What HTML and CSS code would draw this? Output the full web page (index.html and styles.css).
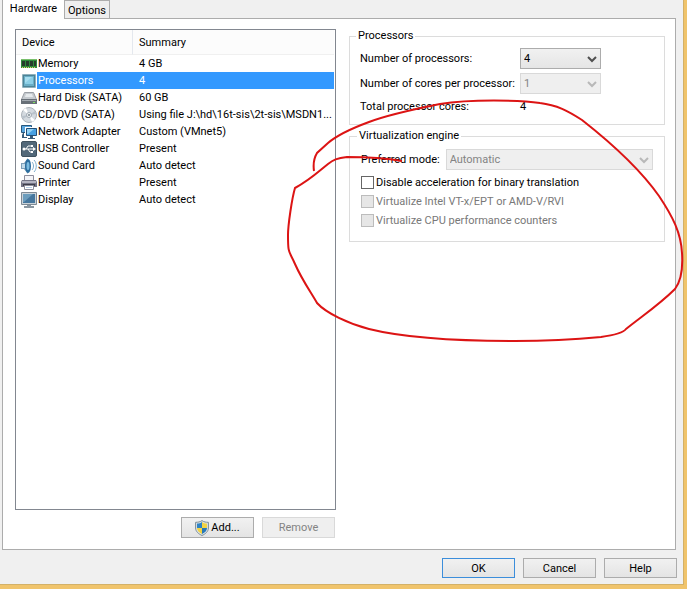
FILE: index.html
```html
<!DOCTYPE html>
<html lang="en">
<head>
<meta charset="utf-8">
<title>Virtual Machine Settings</title>
<link rel="stylesheet" href="styles.css">
</head>
<body>
<main class="dialog">
  <nav class="tabs" role="tablist">
    <button class="tab tab-active" role="tab" aria-selected="true">Hardware</button>
    <button class="tab" role="tab" aria-selected="false">Options</button>
  </nav>
  <section class="panel">
    <div class="devices">
      <div class="device-list">
        <table>
          <colgroup><col class="col-icon"><col class="col-name"><col></colgroup>
          <thead>
            <tr><th colspan="2">Device</th><th class="summary">Summary</th></tr>
          </thead>
          <tbody>
            <tr>
              <td class="icon"><svg width="16" height="16" viewBox="0 0 16 16"><path fill="#2f8a3c" d="M0 3h16v9H0z"/><path fill="#79bf6b" d="M0 3h16v1H0z"/><path fill="#263c2c" d="M1 5h3v5H1zM5 5h3v5H5zM9 5h3v5H9zM13 5h2v5h-2z"/><path fill="#d9d36a" d="M1 11h1v1H1zM3 11h1v1H3zM5 11h1v1H5zM7 11h1v1H7zM9 11h1v1H9zM11 11h1v1h-1zM13 11h1v1h-1z"/></svg></td>
              <td>Memory</td><td class="summary">4 GB</td>
            </tr>
            <tr class="selected">
              <td class="icon"><svg width="16" height="16" viewBox="0 0 16 16"><path fill="#4d8396" d="M2 2h12v12H2z"/><path fill="#69aec6" d="M3 3h10v10H3z"/><path fill="#8ccfe6" d="M4 4h8v7H4z"/><path fill="#a7def0" d="M4 4h7l-7 6z"/><path fill="none" stroke="#8fb2be" d="M1.500 1.500h13v13h-13z"/></svg></td>
              <td>Processors</td><td class="summary">4</td>
            </tr>
            <tr>
              <td class="icon"><svg width="16" height="16" viewBox="0 0 16 16"><path fill="#c5cacf" stroke="#9a9fa5" d="M3.500 2.500h9l3 7H.5z"/><path fill="#687078" d="M0 9h16v5H0z"/><path fill="#a4abb2" d="M1 10h14v1H1z"/><path fill="#e6eaed" d="M5 4h6l1 3H4z"/><path fill="#7ce35e" d="M12 12h2v1h-2z"/></svg></td>
              <td>Hard Disk (SATA)</td><td class="summary">60 GB</td>
            </tr>
            <tr>
              <td class="icon"><svg width="16" height="16" viewBox="0 0 16 16"><circle cx="8" cy="8" r="7.500" fill="#d4dae0" stroke="#aab1b8"/><path fill="#fff" d="M8 8 2 3l3-2zM8 8l6 5-3 2z"/><path fill="#b9c2cb" d="M8 8 1 9l1 3zM8 8l7-1-1-3z"/><circle cx="8" cy="8" r="2.500" fill="#eef1f3" stroke="#a2abb4"/><circle cx="8" cy="8" r="1" fill="#7d8892"/></svg></td>
              <td>CD/DVD (SATA)</td><td class="summary">Using file J:\hd\16t-sis\2t-sis\MSDN1...</td>
            </tr>
            <tr>
              <td class="icon"><svg width="16" height="16" viewBox="0 0 16 16"><path fill="#5ba7df" stroke="#28577d" d="M.5 1.500h10v7H.5z"/><path fill="#fff" d="M4 3h12v10H4z"/><path fill="#48a0e2" stroke="#244f76" d="M5.500 4.500h10v7h-10z"/><path fill="#91d1f5" d="M6 5h7l-6 5H6z"/><path fill="#385c7a" d="M9 12h3v2h2v1H7v-1h2zM2 9h1v4h3v1H1v-3z"/></svg></td>
              <td>Network Adapter</td><td class="summary">Custom (VMnet5)</td>
            </tr>
            <tr>
              <td class="icon"><svg width="16" height="16" viewBox="0 0 16 16"><rect x=".5" y=".5" width="15" height="15" rx="1.500" fill="#526879" stroke="#40525f"/><path fill="none" stroke="#fff" d="M3 8h9M5 8l2-3h3M7 8l2 3h2"/><circle cx="3" cy="8" r="1.500" fill="#fff"/><path fill="#fff" d="m12 6 3 2-3 2zM10 4h2v2h-2zM10 10h2v2h-2z"/></svg></td>
              <td>USB Controller</td><td class="summary">Present</td>
            </tr>
            <tr>
              <td class="icon"><svg width="16" height="16" viewBox="0 0 16 16"><path fill="#7f9fb8" d="M0 5h3l4-5v16l-4-5H0z"/><path fill="#c3dbe9" d="M1 6h3v4H1z"/><ellipse cx="7" cy="8" rx="3" ry="7" fill="#2b6d9e"/><ellipse cx="7" cy="8" rx="1.500" ry="4" fill="#7bbbe0"/><path fill="none" stroke="#7eaecd" d="M11 4c2 2 2 6 0 8M13 2c3 3 3 9 0 12"/></svg></td>
              <td>Sound Card</td><td class="summary">Auto detect</td>
            </tr>
            <tr>
              <td class="icon"><svg width="16" height="16" viewBox="0 0 16 16"><path fill="#f4f4f8" stroke="#8e8e9c" d="M3.500.5h9v6h-9z"/><path fill="#747486" d="M1 5h14l1 2v5H0V7z"/><path fill="#b4b4c2" d="M1 6h14v2H1z"/><path fill="#3d3d4b" d="M2 9h12v2H2z"/><path fill="#fff" stroke="#8e8e9c" d="M3.500 10.500h9v4h-9z"/><path fill="#b8cde7" d="M5 12h6v1H5z"/></svg></td>
              <td>Printer</td><td class="summary">Present</td>
            </tr>
            <tr>
              <td class="icon"><svg width="16" height="16" viewBox="0 0 16 16"><path fill="#cbd3d9" stroke="#7f8a94" d="M.5.5h15v12H.5z"/><path fill="#46779e" d="M2 2h12v9H2z"/><path fill="#6c9dbd" d="M2 2h10L3 10H2z"/><path fill="#8a96a0" d="M6 13h4v1h3v2H3v-2h3z"/></svg></td>
              <td>Display</td><td class="summary">Auto detect</td>
            </tr>
          </tbody>
        </table>
      </div>
      <div class="device-actions">
        <button class="button"><svg width="14" height="16" viewBox="0 0 14 16"><path fill="#dce4e8" stroke="#7c8c94" d="M7 .6C5 2 3 2.300.6 2.300V8c0 3.500 3 6 6.400 7.500C10.400 14 13.400 11.500 13.400 8V2.300C11 2.300 9 2 7 .6z"/><path fill="#2f83c5" d="M7 2v6H2V3.500C4 3.500 5.500 3 7 2z"/><path fill="#f3d343" d="M7 2v6h5V3.500C10 3.500 8.500 3 7 2zM2 8h5v6c-3-1.500-5-3.500-5-6z"/><path fill="#2878b8" d="M12 8H7v6c3-1.500 5-3.500 5-6z"/></svg>Add...</button>
        <button class="button" disabled>Remove</button>
      </div>
    </div>
    <div class="settings">
      <fieldset class="group group-cpu">
        <legend>Processors</legend>
        <label for="cpus">Number of processors:</label>
        <span class="select"><select id="cpus"><option>4</option></select><svg width="10" height="7" viewBox="0 0 10 7"><path d="m1 1 4 4 4-4"/></svg></span>
        <label for="cores">Number of cores per processor:</label>
        <span class="select"><select id="cores" disabled><option>1</option></select><svg width="10" height="7" viewBox="0 0 10 7"><path d="m1 1 4 4 4-4"/></svg></span>
        <span>Total processor cores:</span>
        <output for="cpus cores">4</output>
      </fieldset>
      <fieldset class="group group-engine">
        <legend>Virtualization engine</legend>
        <div class="mode">
          <label for="mode">Preferred mode:</label>
          <span class="select"><select id="mode" disabled><option>Automatic</option></select><svg width="10" height="7" viewBox="0 0 10 7"><path d="m1 1 4 4 4-4"/></svg></span>
        </div>
        <label class="check"><input type="checkbox">Disable acceleration for binary translation</label>
        <label class="check check-off"><input type="checkbox" disabled>Virtualize Intel VT-x/EPT or AMD-V/RVI</label>
        <label class="check check-off"><input type="checkbox" disabled>Virtualize CPU performance counters</label>
      </fieldset>
    </div>
  </section>
  <footer class="footer">
    <button class="button button-default">OK</button>
    <button class="button">Cancel</button>
    <button class="button">Help</button>
  </footer>
  <svg class="scribble" width="687" height="589" viewBox="0 0 687 589" aria-hidden="true"><path d="M402 161C380 157 360 157 347 157C337 158 333 160 328 164C318 172 310 180 295 188C292 198 288 225 288 235C288 255 289 250 295 264C302 280 312 294 317 303C326 313 349 324 369 329C405 338 465 341 515 341C545 341 580 339 601 337C615 335 623 333 626 329C645 314 660 304 675 289C681 281 683 268 682 253C681 233 673 217 659 196C640 169 610 142 582 120C568 111 557 105 540 103C520 100 470 99 440 104C415 109 390 114 369 122C350 129 335 137 328 143L317 153C314 158 313 164 314 171"/></svg>
</main>
</body>
</html>
```
FILE: styles.css
```css
* { box-sizing: border-box; }

body {
  margin: 0;
  background: #f0f0f0;
  color: #000;
  font: 11px/17px Roboto, "Noto Sans", sans-serif;
}

button, select { font: inherit; color: inherit; }

.dialog {
  position: relative;
  display: flex;
  flex-direction: column;
  min-height: 100vh;
  padding: 0 8px 7px 2px;
  border-right: 3px solid #f0c46c;
  border-bottom: 4px solid #f0c46c;
  box-shadow: inset -1px -1px #d3b168;
}

.tabs {
  display: flex;
  height: 18px;
}

.tab {
  width: 46px;
  height: 18px;
  padding: 1px 0 0;
  border: 1px solid #acacac;
  border-bottom: 0;
  background: #eee;
}

.tab-active {
  z-index: 1;
  width: 62px;
  height: 19px;
  padding: 0 0 3px;
  border-width: 0 0 0 1px;
  background: #fff;
}

.panel {
  flex: 1;
  display: flex;
  gap: 13px;
  padding: 10px 10px 11px 12px;
  border: 1px solid #acacac;
  background: #fff;
}

.devices {
  flex: 0 0 321px;
  display: flex;
  flex-direction: column;
  gap: 7px;
}

.device-list {
  flex: 1;
  padding-right: 1px;
  border: 1px solid #828790;
}

table {
  width: 100%;
  table-layout: fixed;
  border-collapse: separate;
  border-spacing: 0;
}

.col-icon { width: 21px; }
.col-name { width: 95px; }

th, td {
  height: 17px;
  padding: 0 0 0 1px;
  font-weight: normal;
  line-height: 17px;
  text-align: left;
  white-space: nowrap;
}

th {
  height: 25px;
  padding-left: 6px;
  border-bottom: 1px solid #f0f0f0;
  background: #fcfcfc;
}

th.summary { border-left: 1px solid #e4e8ee; }
.summary { padding-left: 6px; }
td.summary { padding-left: 7px; }

.icon { padding-left: 5px; }
.icon svg { display: block; }

.selected td { background: #3399ff; color: #fff; }
.selected .icon { background: none; }

.device-actions, .footer {
  display: flex;
  justify-content: flex-end;
  gap: 8px;
}

.device-actions { padding-right: 1px; }

.button {
  display: flex;
  align-items: center;
  justify-content: center;
  width: 73px;
  height: 21px;
  padding: 0;
  border: 1px solid #acacac;
  background: linear-gradient(#f1f1f1, #e4e4e4);
}

.footer .button { height: 20px; }

.button svg { margin-right: 2px; }

.button:disabled {
  border-color: #d9d9d9;
  background: #efefef;
  color: #838383;
}

.footer .button-default { border-color: #3c8edb; }

.footer {
  margin: 8px -1px 0 0;
}

.settings { flex: 1; }

.group {
  min-width: 0;
  margin: 0;
  border: 1px solid #dcdcdc;
}

legend {
  margin-left: -4px;
  padding: 0 2px;
  line-height: 14px;
}

.group-cpu {
  display: grid;
  grid-template-columns: 160px 81px;
  row-gap: 4px;
  align-items: center;
  padding: 5px 10px 9px;
}

.group-engine {
  margin-top: 4px;
  padding: 6px 11px 11px;
}

.mode {
  display: flex;
  align-items: center;
  gap: 6px;
  margin-bottom: 3px;
}

.mode .select { flex: 1; }

.select {
  position: relative;
  display: flex;
}

select {
  appearance: none;
  width: 100%;
  height: 21px;
  padding: 0 3px;
  border: 1px solid #acacac;
  border-radius: 0;
  background: linear-gradient(#f1f1f1, #e5e5e5);
}

select:disabled {
  border-color: #d9d9d9;
  background: #efefef;
  color: #838383;
  opacity: 1;
}

.select svg {
  position: absolute;
  top: 8px;
  right: 4px;
  fill: none;
  stroke: #505050;
  stroke-width: 2;
  pointer-events: none;
}

select:disabled + svg { stroke: #b8b8b8; }

.check {
  display: flex;
  align-items: center;
  gap: 2px;
  height: 19px;
}

.check input {
  appearance: none;
  width: 13px;
  height: 13px;
  margin: 0;
  border: 1px solid #666;
  background: #fff;
}

.check-off { color: #787878; }
.check-off input { border-color: #bcbcbc; background: #e6e6e6; }

.scribble {
  position: absolute;
  top: 0;
  left: 0;
  z-index: 2;
  fill: none;
  stroke: #dc1414;
  stroke-width: 2;
  pointer-events: none;
}
```
